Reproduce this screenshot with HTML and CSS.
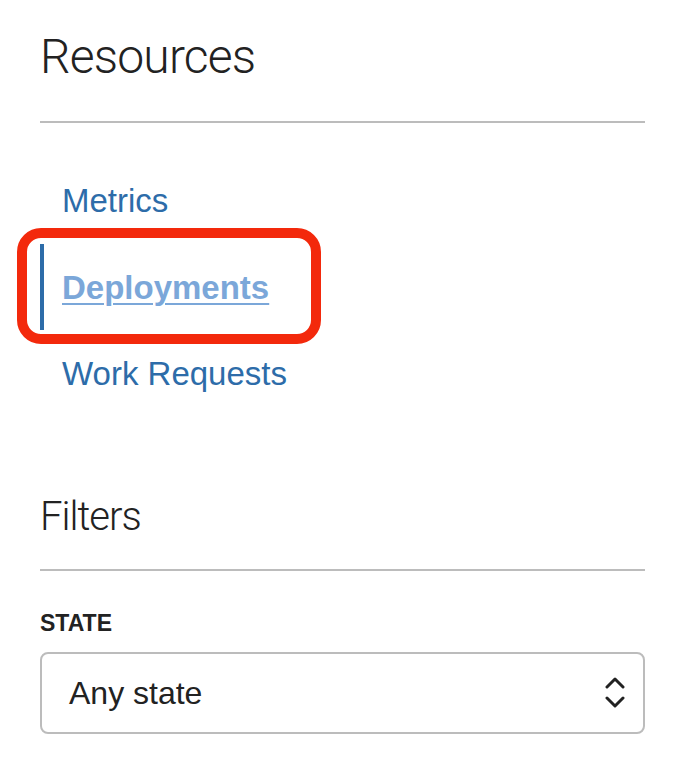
FILE: index.html
```html
<!DOCTYPE html>
<html lang="en">
<head>
<meta charset="utf-8">
<title>Resources</title>
<link rel="stylesheet" href="styles.css">
</head>
<body>
<div class="panel">
  <h2 class="title title-resources">Resources</h2>
  <hr class="rule rule-top">
  <ul class="nav">
    <li class="nav-item nav-first"><a class="nav-link" href="#">Metrics</a></li>
    <li class="nav-item nav-active"><a class="nav-link active" href="#">Deployments</a><span class="callout"></span></li>
    <li class="nav-item nav-last"><a class="nav-link" href="#">Work Requests</a></li>
  </ul>
  <h2 class="title title-filters">Filters</h2>
  <hr class="rule rule-filters">
  <label class="field-label">STATE</label>
  <div class="select">
    <span class="select-value">Any state</span>
    <svg class="select-arrows" width="20" height="32" viewBox="0 0 20 32" aria-hidden="true">
      <polyline points="2,10 10,2 18,10" fill="none" stroke="#222" stroke-width="3" stroke-linecap="round" stroke-linejoin="round"/>
      <polyline points="2,21 10,29 18,21" fill="none" stroke="#222" stroke-width="3" stroke-linecap="round" stroke-linejoin="round"/>
    </svg>
  </div>
</div>
</body>
</html>
```
FILE: styles.css
```css
html, body {
  margin: 0;
  padding: 0;
  background: #fff;
}
.panel {
  width: 605px;
  padding: 33px 0 0 40px;
  font-family: "Liberation Sans", Arial, sans-serif;
  color: #222;
}
.title {
  margin: 0;
  font-family: Roboto, "Liberation Sans", sans-serif;
  font-weight: 300;
  color: #222;
}
.title-resources {
  font-size: 48px;
  line-height: 48px;
  letter-spacing: -0.8px;
}
.title-filters {
  font-size: 40px;
  line-height: 41px;
  letter-spacing: -1px;
  margin-top: 106px;
}
.rule {
  border: 0;
  height: 2px;
  background: #bcbcbc;
  margin: 0;
}
.rule-top {
  margin-top: 40px;
}
.rule-filters {
  margin-top: 32px;
}
.nav {
  list-style: none;
  margin: 61px 0 0 0;
  padding: 0;
}
.nav-item {
  font-size: 33px;
  line-height: 33px;
  padding-left: 22px;
}
.nav-active {
  position: relative;
  margin-top: 27px;
  padding: 27px 0 26px 18px;
  border-left: 4px solid #2d6ca9;
}
.nav-last {
  margin-top: 27px;
}
.nav-link {
  color: #2d6ca9;
  text-decoration: none;
}
.nav-link.active {
  color: #7ba7d9;
  font-weight: 700;
  text-decoration: underline;
  text-decoration-thickness: 2px;
  text-underline-offset: 4px;
}
.callout {
  position: absolute;
  left: -27px;
  top: -16px;
  width: 284px;
  height: 96px;
  border: 10px solid #f3290c;
  border-radius: 24px;
  pointer-events: none;
}
.field-label {
  display: block;
  margin-top: 41px;
  font-size: 23px;
  line-height: 23px;
  font-weight: 700;
  color: #222;
}
.select {
  margin-top: 17px;
  height: 78px;
  border: 2px solid #bcbcbc;
  border-radius: 8px;
  display: flex;
  align-items: center;
  justify-content: space-between;
  padding: 0 18px 0 27px;
}
.select-value {
  font-size: 32px;
  line-height: 32px;
  color: #222;
}
.select-arrows {
  display: block;
}
```
